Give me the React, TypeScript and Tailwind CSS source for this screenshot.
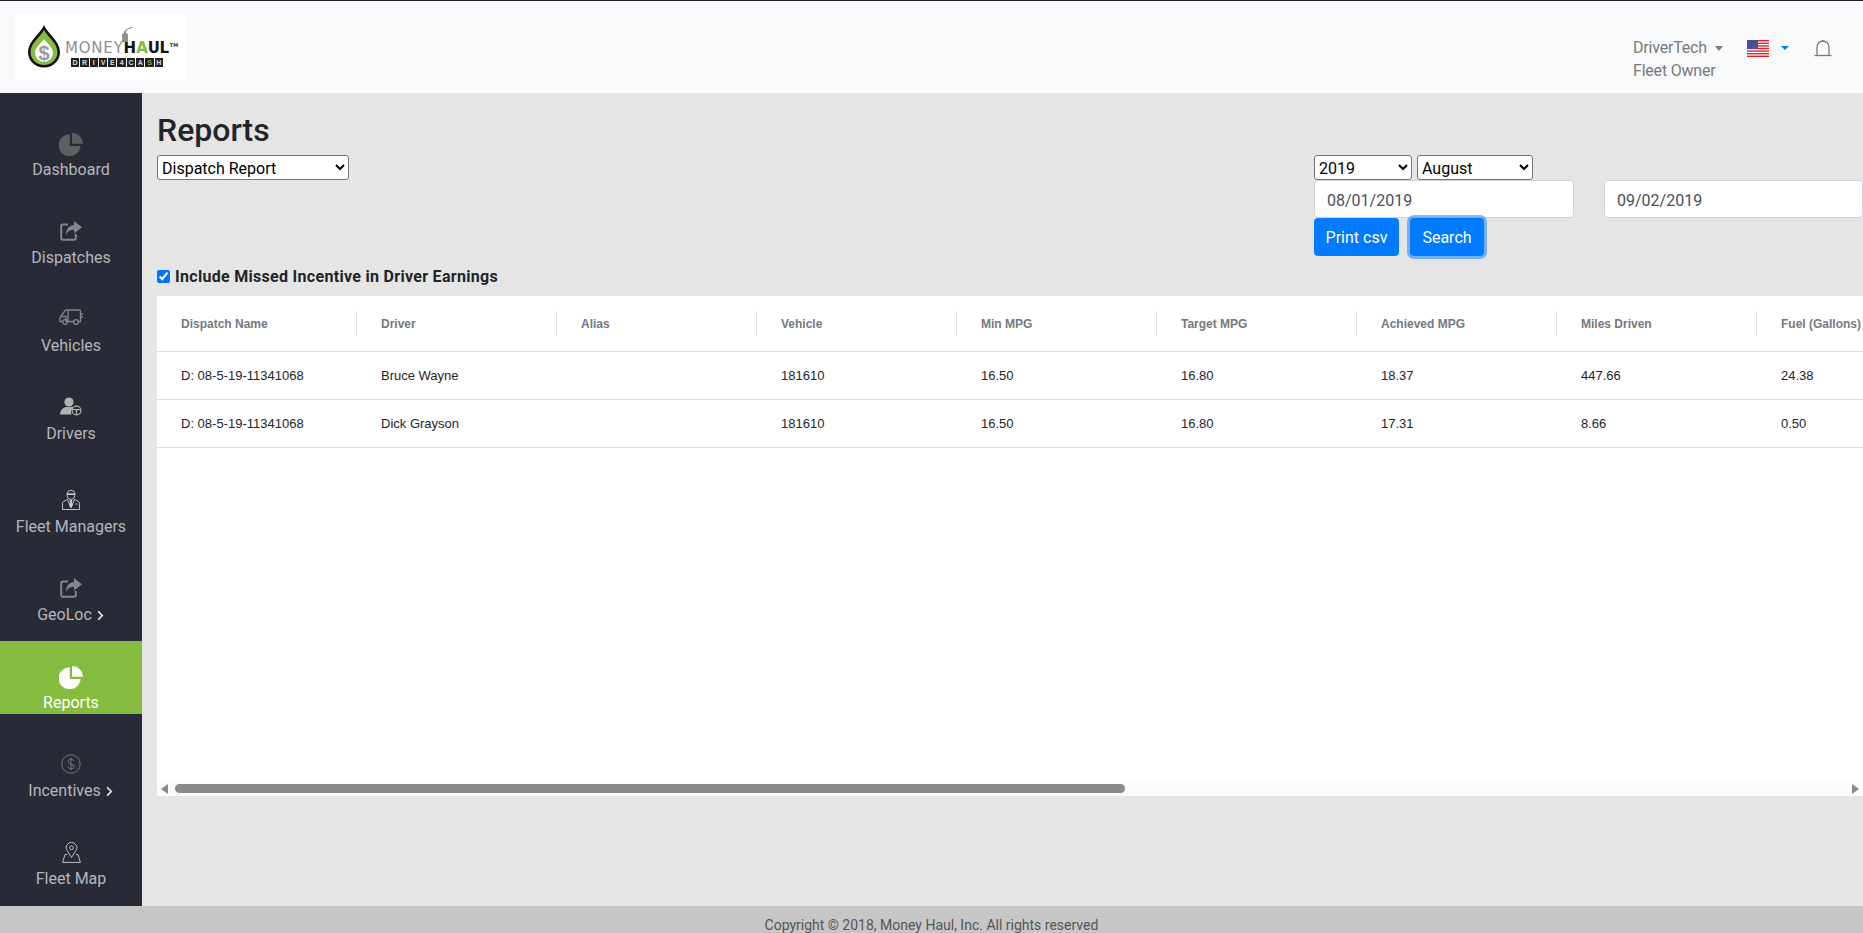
import { type FC, type ReactNode } from 'react'
import { FaChevronRight } from 'react-icons/fa'

const columns = [
    'Dispatch Name',
    'Driver',
    'Alias',
    'Vehicle',
    'Min MPG',
    'Target MPG',
    'Achieved MPG',
    'Miles Driven',
    'Fuel (Gallons)',
    '',
    '',
    '',
    '',
    '',
    '',
]

const rows = [
    ['D: 08-5-19-11341068', 'Bruce Wayne', '', '181610', '16.50', '16.80', '18.37', '447.66', '24.38'],
    ['D: 08-5-19-11341068', 'Dick Grayson', '', '181610', '16.50', '16.80', '17.31', '8.66', '0.50'],
]

const PieIcon: FC<{ className?: string }> = ({ className }) => (
    <svg viewBox="0 0 24 23" className={className} fill="currentColor">
        <path d="M10.8 1.2 A11 11 0 1 0 21.6 13 H10.8 Z" />
        <path d="M13 0 A11 11 0 0 1 24 10.8 H13 Z" />
    </svg>
)

const ShareIcon = () => (
    <svg viewBox="0 0 22 20" className="h-[20px] w-[22px] text-[#85868a]">
        <path
            d="M8 3.5 H3 Q1.2 3.5 1.2 5.3 V17 Q1.2 18.8 3 18.8 H14 Q15.8 18.8 15.8 17 V13"
            fill="none"
            stroke="currentColor"
            strokeWidth="2"
        />
        <path d="M14 0 L22 6.2 L14 12.4 V8.8 Q8 8.8 6 14 Q5.5 5.5 14 3.8 Z" fill="currentColor" />
    </svg>
)

const TruckIcon = () => (
    <svg viewBox="0 0 24 16" className="h-[16px] w-[24px] text-[#85868a]" fill="none" stroke="currentColor" strokeWidth="1.3">
        <path d="M6.5 1 H20 Q21.5 1 21.5 2.5 V12.5 H18.5" />
        <path d="M6.5 1 L2 7 L1 9 V12.5 H3.5" />
        <path d="M1.5 7.5 H7 V12.5 H8" />
        <path d="M9 1 V12.5 H15" />
        <path d="M21.5 5 H24 M21.5 8 H24" />
        <circle cx="6" cy="13" r="2.3" />
        <circle cx="17" cy="13" r="2.3" />
    </svg>
)

const DriverIcon = () => (
    <svg viewBox="0 0 22 19" className="h-[19px] w-[22px] text-[#b0b1b4]">
        <circle cx="9" cy="5" r="4.6" fill="currentColor" />
        <path d="M0 17.5 Q0.5 11 6 10 H12 Q13 10 13.5 10.5 A6 6 0 0 0 11.5 17.5 Z" fill="currentColor" />
        <circle cx="16.5" cy="13.5" r="4.4" fill="none" stroke="currentColor" strokeWidth="1.2" />
        <circle cx="16.5" cy="13.5" r="1.1" fill="currentColor" />
        <path d="M12.5 12.5 H20.5 M16.5 14 V18" stroke="currentColor" strokeWidth="1" />
    </svg>
)

const ManagerIcon = () => (
    <svg viewBox="0 0 18 21" className="h-[21px] w-[18px] text-[#d0d0d2]" fill="none" stroke="currentColor" strokeWidth="0.9">
        <path d="M5.2 5 A3.8 3.8 0 0 1 12.8 5 V6.5 A3.8 4 0 0 1 5.2 6.5 Z" />
        <path d="M4.8 5.2 H13.2" strokeWidth="1.6" />
        <path d="M5.5 10.5 L1.5 12.5 Q0.5 13 0.5 14.5 V20.5 H17.5 V14.5 Q17.5 13 16.5 12.5 L12.5 10.5" />
        <path d="M5.5 10.5 L9 19 L12.5 10.5" />
        <path d="M8 11.5 H10 L9.6 13 L10.2 16.5 L9 18 L7.8 16.5 L8.4 13 Z" fill="currentColor" />
        <path d="M13.5 15 H15.5" />
    </svg>
)

const DollarIcon = () => (
    <svg viewBox="0 0 20 20" className="h-[20px] w-[20px] text-[#74767b]" fill="none" stroke="currentColor" strokeWidth="1">
        <circle cx="10" cy="10" r="9.2" />
        <path d="M13 7 Q12.5 5.3 10 5.3 Q7 5.3 7 7.5 Q7 9.4 10 10 Q13.2 10.6 13.2 12.6 Q13.2 14.7 10 14.7 Q7.3 14.7 6.8 12.8" />
        <path d="M10 3.8 V16.2" />
    </svg>
)

const MapPinIcon = () => (
    <svg viewBox="0 0 19 21" className="h-[21px] w-[19px] text-[#bcbdc0]" fill="none" stroke="currentColor" strokeWidth="1">
        <path d="M9.5 15.5 L5.2 8.6 A5.2 5.2 0 1 1 13.8 8.6 Z" />
        <circle cx="9.5" cy="5.8" r="1.9" />
        <path d="M5.2 12.5 H3 L0.6 20.4 H18.4 L16 12.5 H13.8" />
    </svg>
)

interface NavItem {
    label: string
    icon: ReactNode
    iconTop: string
    slot: string
    active?: boolean
    more?: boolean
}

const navItems: NavItem[] = [
    { label: 'Dashboard', icon: <PieIcon className="h-[23px] w-[24px] text-[#5e5f63]" />, iconTop: 'pt-[25px]', slot: 'h-[49px]' },
    { label: 'Dispatches', icon: <ShareIcon />, iconTop: 'pt-[25px]', slot: 'h-[49px]' },
    { label: 'Vehicles', icon: <TruckIcon />, iconTop: 'pt-[25px]', slot: 'h-[49px]' },
    { label: 'Drivers', icon: <DriverIcon />, iconTop: 'pt-[25px]', slot: 'h-[49px]' },
    { label: 'Fleet Managers', icon: <ManagerIcon />, iconTop: 'pt-[29px]', slot: 'h-[54px]' },
    { label: 'GeoLoc', icon: <ShareIcon />, iconTop: 'pt-[25px]', slot: 'h-[49px]', more: true },
    { label: 'Reports', icon: <PieIcon className="h-[23px] w-[24px] text-white" />, iconTop: 'pt-[25px]', slot: 'h-[49px]', active: true },
    { label: 'Incentives', icon: <DollarIcon />, iconTop: 'pt-[25px]', slot: 'h-[49px]', more: true },
    { label: 'Fleet Map', icon: <MapPinIcon />, iconTop: 'pt-[25px]', slot: 'h-[49px]' },
]

const Logo = () => (
    <div className="relative flex h-[66px] w-[171px] items-center bg-white pl-[12px]">
        <svg viewBox="0 0 34 44" className="mb-[2px] h-[44px] w-[34px] shrink-0">
            <path d="M17 1 C14 9 1 17 1 28 A16 15.5 0 0 0 33 28 C33 17 20 9 17 1 Z" fill="#111" />
            <path d="M17 6 C14 12 3.5 19 3.5 28 A13.5 13 0 0 0 30.5 28 C30.5 19 20 12 17 6 Z" fill="#85bb3f" />
            <path d="M17 15 C14.5 19 8 23 8 29 A9 9 0 0 0 26 29 C26 23 19.5 19 17 15 Z" fill="#fff" />
            <text x="17" y="36" textAnchor="middle" fontSize="20" fontWeight="700" fill="#9a9a9a" fontFamily="Liberation Sans, sans-serif">$</text>
        </svg>
        <div className="mt-[15px] ml-[4px] flex flex-col">
            <div className="flex items-start font-['DejaVu_Sans',sans-serif] text-[15px] leading-[12px]">
                <span className="tracking-[0.8px] text-[#8d8f91]">MONEY</span>
                <span className="font-bold text-[#111]">H</span>
                <span className="font-bold text-[#85bb3f]">A</span>
                <span className="font-bold tracking-[-0.4px] text-[#111]">UL</span>
                <span className="ml-[1px] text-[5px] leading-[7px] font-bold text-[#333]">TM</span>
            </div>
            <div className="mt-[4px] ml-[6px] flex h-[9px] w-[92px] gap-[1px] font-['Liberation_Sans',sans-serif] text-[7px] leading-[9px] font-bold text-[#ddd]">
                {'DRIVE4CASH'.split('').map((c, i) => (
                    <span key={i} className={`flex-1 bg-[#222] text-center ${i === 8 ? 'text-[#85bb3f]' : ''}`}>
                        {c}
                    </span>
                ))}
            </div>
        </div>
        {/* pump nozzle sits over the wordmark */}
        <svg viewBox="0 0 13 15" className="absolute top-[13px] left-[105px] h-[15px] w-[13px]" fill="#8d8f91">
            <path d="M2 15 V8 Q2 6 4 6 V4 H6 V6 Q8 6 8 8 V15 Z" />
            <path d="M5 5 Q6 1.5 12.5 0.5" fill="none" stroke="#8d8f91" strokeWidth="1.2" />
        </svg>
    </div>
)

const App: FC = () => {
    return (
        <div className="flex h-[933px] flex-col overflow-hidden bg-[#e5e5e5] font-['Roboto',sans-serif] text-[16px] text-[#212529]">
            <header className="flex h-[93px] shrink-0 items-start justify-between border-t border-[#1c1f2b] bg-[#f8f9fa] pt-[13px] pl-[15px]">
                <Logo />
                <div className="flex items-start pt-[22px] pr-[31px]">
                    <div className="flex w-[114px] flex-col tracking-[-0.2px] text-[#777a7d]">
                        <div className="flex h-[24px] items-center">
                            DriverTech
                            <span className="ml-[8px] h-0 w-0 border-x-[4px] border-t-[5px] border-x-transparent border-t-[#777a7d]" />
                        </div>
                        <div className="mt-[-1px] h-[24px] leading-[24px]">Fleet Owner</div>
                    </div>
                    <svg viewBox="0 0 22 17" className="mt-[4px] h-[17px] w-[22px]">
                        <rect width="22" height="17" fill="#fff" />
                        {[0, 2.6, 5.2, 7.8, 10.4, 13, 15.6].map((y) => (
                            <rect key={y} y={y} width="22" height="1.4" fill="#e0262d" />
                        ))}
                        <rect width="11" height="9" fill="#4a4f93" />
                    </svg>
                    <span className="mt-[10px] ml-[12px] h-0 w-0 border-x-[4px] border-t-[4px] border-x-transparent border-t-[#007bff]" />
                    <svg viewBox="0 0 18 17" className="mt-[4px] ml-[25px] h-[17px] w-[18px] text-[#777a7d]" fill="none" stroke="currentColor" strokeWidth="1.3">
                        <path d="M3 15 V7 A6 6 0 0 1 15 7 V15" />
                        <path d="M0.5 15.5 H17.5" />
                        <path d="M8 0.8 H10" />
                    </svg>
                </div>
            </header>

            <div className="flex min-h-0 flex-1">
                <nav className="flex w-[142px] shrink-0 flex-col bg-[#282b35] pt-[15px]">
                    {navItems.map((item) => (
                        <a
                            key={item.label}
                            className={`mb-[15px] flex flex-col items-center ${item.active ? 'bg-[#85bb3f] text-white' : 'text-[#b5b7bb]'}`}
                        >
                            <div className={`flex w-full justify-center ${item.slot} ${item.iconTop}`}>{item.icon}</div>
                            <div className="flex h-[24px] items-center pt-[2px] leading-[22px]">
                                {item.label}
                                {item.more && <FaChevronRight className="ml-[4px] h-[11px] w-[9px] text-[#e0e0e0]" />}
                            </div>
                        </a>
                    ))}
                </nav>

                <main className="flex min-w-0 flex-1 flex-col pl-[15px]">
                    <h1 className="mt-[18px] h-[44px] text-[32px] leading-[38px] font-medium">Reports</h1>
                    <div className="flex h-[101px] items-start justify-between">
                        <select
                            defaultValue="dispatch"
                            className="h-[25px] w-[192px] rounded-[3px] border border-[#767676] bg-white pt-[2px] text-[16px] text-black"
                        >
                            <option value="dispatch">Dispatch Report</option>
                        </select>
                        <div className="flex w-[549px] flex-col">
                            <div className="flex h-[25px] gap-[5px]">
                                <select defaultValue="2019" className="h-[25px] w-[98px] rounded-[3px] border border-[#767676] bg-white pt-[2px] text-black">
                                    <option value="2019">2019</option>
                                </select>
                                <select defaultValue="August" className="h-[25px] w-[116px] rounded-[3px] border border-[#767676] bg-white pt-[2px] text-black">
                                    <option value="August">August</option>
                                </select>
                            </div>
                            <div className="flex h-[38px] justify-between">
                                <input
                                    defaultValue="08/01/2019"
                                    className="h-[38px] w-[260px] rounded-[4px] border border-[#ced4da] bg-white px-[12px] pt-[2px] text-[#495057]"
                                />
                                <input
                                    defaultValue="09/02/2019"
                                    className="h-[38px] w-[259px] rounded-[4px] border border-[#ced4da] bg-white px-[12px] pt-[2px] text-[#495057]"
                                />
                            </div>
                            <div className="flex gap-[11px]">
                                <button className="h-[38px] w-[85px] rounded-[4px] bg-[#007bff] pt-[2px] text-white">Print csv</button>
                                <button className="h-[38px] w-[74px] rounded-[4px] bg-[#007bff] pt-[2px] text-white shadow-[0_0_0_3px_rgba(0,123,255,0.5)]">
                                    Search
                                </button>
                            </div>
                        </div>
                    </div>
                    <label className="mt-[13px] flex h-[14px] items-center gap-[5px] font-bold tracking-[0.3px]">
                        <input type="checkbox" defaultChecked className="h-[13px] w-[13px]" />
                        <span className="pt-[2px]">Include Missed Incentive in Driver Earnings</span>
                    </label>

                    <div className="mt-[13px] flex h-[500px] flex-col overflow-hidden bg-white font-['Liberation_Sans',sans-serif] text-[12px]">
                        <div className="min-h-0 flex-1 overflow-hidden">
                            <table className="w-[3000px] table-fixed border-collapse">
                                <thead>
                                    <tr className="h-[55px] border-b border-[#dadde0]">
                                        {columns.map((col, i) => (
                                            <th key={i} className="w-[200px] p-0 text-left font-bold text-[#75797d]">
                                                <div className="flex h-[24px] items-center border-r border-[#dee2e6] pt-[2px] pl-[24px]">{col}</div>
                                            </th>
                                        ))}
                                    </tr>
                                </thead>
                                <tbody>
                                    {rows.map((row, r) => (
                                        <tr key={r} className="h-[48px] border-b border-[#dadde0] text-[13px] text-[#212529]">
                                            {columns.map((_, i) => (
                                                <td key={i} className="p-0 pt-[1px] pl-[24px]">
                                                    {row[i] ?? ''}
                                                </td>
                                            ))}
                                        </tr>
                                    ))}
                                </tbody>
                            </table>
                        </div>
                        <div className="flex h-[15px] shrink-0 items-center bg-[#fbfbfb] pr-[4px] pl-[4px]">
                            <span className="h-0 w-0 border-y-[5px] border-r-[7px] border-y-transparent border-r-[#8a8a8a]" />
                            <span className="ml-[7px] h-[9px] w-[950px] rounded-[5px] bg-[#8a8a8a]" />
                            <span className="ml-auto h-0 w-0 border-y-[5px] border-l-[7px] border-y-transparent border-l-[#8a8a8a]" />
                        </div>
                    </div>
                </main>
            </div>

            <footer className="h-[27px] shrink-0 bg-[#c6c6c6] pt-[9px] text-center text-[14px] leading-[21px] text-[#555]">
                Copyright © 2018, Money Haul, Inc. All rights reserved
            </footer>
        </div>
    )
}

export default App
